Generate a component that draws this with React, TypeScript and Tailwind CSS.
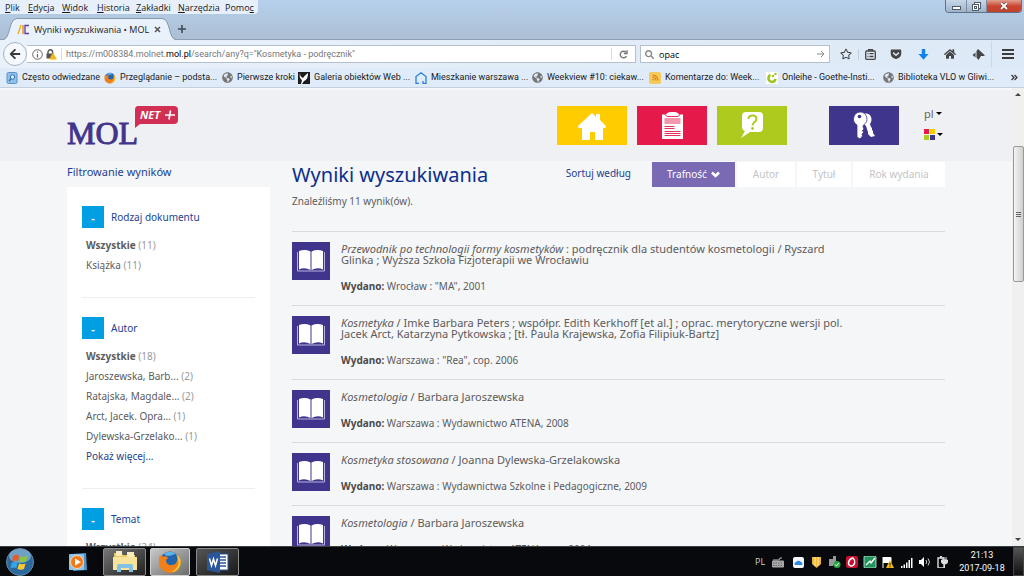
import React from "react";
import {
  FaArrowLeft,
  FaSearch,
  FaRegStar,
  FaGetPocket,
  FaHome,
  FaGlobeAmericas,
  FaRss,
} from "react-icons/fa";

const menus = [
  { before: "", key: "P", after: "lik", width: "w-[23px]" },
  { before: "", key: "E", after: "dycja", width: "w-[34px]" },
  { before: "", key: "W", after: "idok", width: "w-[35px]" },
  { before: "", key: "H", after: "istoria", width: "w-[39px]" },
  { before: "", key: "Z", after: "akładki", width: "w-[42px]" },
  { before: "", key: "N", after: "arzędzia", width: "w-[47px]" },
  { before: "Pomo", key: "c", after: "", width: "w-[33px]" },
];

const bookmarks = [
  { icon: "often", label: "Często odwiedzane", width: "w-[98px]" },
  { icon: "firefox", label: "Przeglądanie – podsta...", width: "w-[118px]" },
  { icon: "globe", label: "Pierwsze kroki", width: "w-[76px]" },
  { icon: "bird", label: "Galeria obiektów Web ...", width: "w-[117px]" },
  { icon: "house", label: "Mieszkanie warszawa ...", width: "w-[117px]" },
  { icon: "globe", label: "Weekview #10: ciekaw...", width: "w-[117px]" },
  { icon: "rss", label: "Komentarze do: Week...", width: "w-[117px]" },
  { icon: "onleihe", label: "Onleihe - Goethe-Insti...", width: "w-[117px]" },
  { icon: "globe", label: "Biblioteka VLO w Gliwi...", width: "w-[120px]" },
];

const filters = [
  {
    title: "Rodzaj dokumentu",
    items: [
      { label: "Wszystkie", count: 11 },
      { label: "Książka", count: 11 },
    ],
    more: false,
  },
  {
    title: "Autor",
    items: [
      { label: "Wszystkie", count: 18 },
      { label: "Jaroszewska, Barb...", count: 2 },
      { label: "Ratajska, Magdale...", count: 2 },
      { label: "Arct, Jacek. Opra...", count: 1 },
      { label: "Dylewska-Grzelako...", count: 1 },
    ],
    more: true,
  },
  {
    title: "Temat",
    items: [{ label: "Wszystkie", count: 24 }],
    more: true,
  },
];

const results = [
  {
    title: "Przewodnik po technologii formy kosmetyków",
    lines: [" : podręcznik dla studentów kosmetologii / Ryszard", "Glinka ; Wyższa Szkoła Fizjoterapii we Wrocławiu"],
    published: 'Wrocław : "MA", 2001',
  },
  {
    title: "Kosmetyka",
    lines: [
      " / Imke Barbara Peters ; współpr. Edith Kerkhoff [et al.] ; oprac. merytoryczne wersji pol.",
      "Jacek Arct, Katarzyna Pytkowska ; [tł. Paula Krajewska, Zofia Filipiuk-Bartz]",
    ],
    published: 'Warszawa : "Rea", cop. 2006',
  },
  {
    title: "Kosmetologia",
    lines: [" / Barbara Jaroszewska"],
    published: "Warszawa : Wydawnictwo ATENA, 2008",
  },
  {
    title: "Kosmetyka stosowana",
    lines: [" / Joanna Dylewska-Grzelakowska"],
    published: "Warszawa : Wydawnictwa Szkolne i Pedagogiczne, 2009",
  },
  {
    title: "Kosmetologia",
    lines: [" / Barbara Jaroszewska"],
    published: "Warszawa : Wydawnictwo ATENA, cop. 2004",
  },
];

const FirefoxLogo = ({ className }: { className: string }) => (
  <svg className={className} viewBox="0 0 24 24">
    <circle cx="12" cy="11.5" r="10" fill="#2463ae" />
    <path d="M6 4c3-3 9-3 12 0-2 0-3 1-5 1.500C10 6 8 6 6 4Z" fill="#5fb4ea" />
    <path d="M2 5c1 1 2 1.500 4 1.500 2-.5 3 0 4 1.500l-2 2c0 3 2 5 5 5 3 0 5-1 6-4 1-3 0-5-1-7 4 3 5 6 4.500 10-1 5-5 9-10.500 9S1 18.500 1 13c0-3 0-5 1-8Z" fill="#f08019" />
    <path d="M18 4c4 3 5 6 4.500 10-1 5-5 8-9 8 5-3 7-6 7-10 0-3-1-5-2.500-8Z" fill="#fbc92f" />
  </svg>
);

const BookmarkIcon = ({ icon }: { icon: string }) => {
  switch (icon) {
    case "often":
      return (
        <svg className="size-3 shrink-0" viewBox="0 0 12 12">
          <rect x="1" y="0.5" width="10" height="11" rx="1.5" fill="#8fc0ea" stroke="#5b93c9" />
          <circle cx="6.5" cy="5" r="2.2" fill="#e4f2fd" stroke="#2f6fae" />
          <path d="M5 6.8 3 9" stroke="#2f6fae" strokeWidth="1.3" />
        </svg>
      );
    case "firefox":
      return <FirefoxLogo className="size-3 shrink-0" />;
    case "bird":
      return (
        <svg className="size-3 shrink-0" viewBox="0 0 12 12">
          <rect width="12" height="12" fill="#1d1d1d" />
          <path d="M2 1c0 3 1 4 3 5C6 4 8 3 10 1c0 4-1 7-4 8l-2 3H3l1-4C2 7 1 4 2 1Z" fill="#fff" />
        </svg>
      );
    case "house":
      return (
        <svg className="size-3 shrink-0" viewBox="0 0 12 12" fill="none" stroke="#2a7fe0" strokeWidth="1.3">
          <path d="M4 11.300H1V4.500L6 .8l5 3.700v6.800H8V9" />
        </svg>
      );
    case "rss":
      return (
        <span className="flex size-3 shrink-0 items-center justify-center rounded-xs bg-[#f5c95c]">
          <FaRss size={7} className="text-[#e07b12]" />
        </span>
      );
    case "onleihe":
      return (
        <svg className="size-3 shrink-0" viewBox="0 0 12 12">
          <rect width="12" height="12" fill="#fff" />
          <path d="M4.500 3A3.600 3.600 0 1 0 9.500 7" fill="none" stroke="#9fc41c" strokeWidth="2.6" />
          <circle cx="7" cy="4" r="1.2" fill="#9fc41c" />
          <circle cx="9.500" cy="2" r="1.2" fill="#9fc41c" />
        </svg>
      );
    default:
      return <FaGlobeAmericas size={11} className="shrink-0 text-[#777]" />;
  }
};

const TitleBar = () => (
  <header className="flex h-10 flex-col bg-gradient-to-b from-[#b6d0ec] to-[#acbfd3]">
    <div className="flex h-[14px] items-start justify-between">
      <nav className="flex h-[14px] items-center rounded-br-sm bg-[#e6effa] pl-[5px]">
        {menus.map((menu) => (
          <button key={menu.key} className={`${menu.width} text-left whitespace-nowrap`}>
            {menu.before}
            <u>{menu.key}</u>
            {menu.after}
          </button>
        ))}
      </nav>
      <div className="mr-[2px] flex h-[13px] overflow-hidden rounded-b border border-t-0 border-[#5f7185]">
        <button aria-label="Minimalizuj" className="flex w-[21px] items-center justify-center border-r border-[#7b8c9f] bg-gradient-to-b from-[#c9d8e8] to-[#9db2c9]">
          <span className="mt-1 h-1 w-[9px] border border-[#4f5b69] bg-white" />
        </button>
        <button aria-label="Przywróć" className="flex w-5 items-center justify-center border-r border-[#7b8c9f] bg-gradient-to-b from-[#c9d8e8] to-[#9db2c9]">
          <svg className="size-[9px]" viewBox="0 0 9 9" fill="#fff" stroke="#4f5b69">
            <rect x="2.5" y="0.5" width="6" height="6" />
            <rect x="0.5" y="2.5" width="6" height="6" />
            <rect x="2.5" y="4.5" width="2" height="2" />
          </svg>
        </button>
        <button aria-label="Zamknij" className="flex w-[34px] items-center justify-center bg-gradient-to-b from-[#e0a093] via-[#c9452f] to-[#c2412c]">
          <svg className="size-2" viewBox="0 0 8 8">
            <path d="m1 1 6 6M7 1 1 7" stroke="#5b3a3a" strokeWidth="3" />
            <path d="m1 1 6 6M7 1 1 7" stroke="#fff" strokeWidth="1.8" />
          </svg>
        </button>
      </div>
    </div>
    <div className="flex flex-1 items-end border-b border-[#8ca0b5]">
      <div className="-mb-px ml-[3px] flex h-[22px]">
        <svg className="h-[22px] w-[14px]" viewBox="0 0 14 22">
          <path d="M0 22C8 21 5 1 14 .5V22Z" fill="#e9f1fb" />
          <path d="M0 21.500C8 21 5 1 14 .5" fill="none" stroke="#8798ab" />
        </svg>
        <div className="flex items-center border-t border-[#8798ab] bg-[#e9f1fb]">
          <svg className="size-[13px]" viewBox="0 0 13 13" fill="none">
            <path d="M4 2 1 11" stroke="#f3b21c" strokeWidth="1.5" />
            <path d="M6 2v9" stroke="#e98a2a" strokeWidth="1.5" />
            <path d="M12 2.500H8v8h4" stroke="#5b3fa0" strokeWidth="1.3" />
          </svg>
          <span className="ml-1 w-[118px] whitespace-nowrap text-[#222]">Wyniki wyszukiwania • MOL</span>
          <button aria-label="Zamknij kartę" className="mr-px ml-[2px] flex size-[7px] items-center">
            <svg className="size-[7px]" viewBox="0 0 7 7">
              <path d="m1 1 5 5M6 1 1 6" stroke="#555" strokeWidth="1.5" />
            </svg>
          </button>
        </div>
        <svg className="h-[22px] w-[14px]" viewBox="0 0 14 22">
          <path d="M14 22C6 21 9 1 0 .5V22Z" fill="#e9f1fb" />
          <path d="M14 21.500C6 21 9 1 0 .5" fill="none" stroke="#8798ab" />
        </svg>
      </div>
      <button aria-label="Nowa karta" className="mb-[6px] ml-[2px]">
        <svg className="size-2" viewBox="0 0 8 8">
          <path d="M4 0v8M0 4h8" stroke="#3d4a58" strokeWidth="1.6" />
        </svg>
      </button>
    </div>
  </header>
);

const Toolbar = () => (
  <div className="flex h-7 items-center bg-gradient-to-r from-[#e9f1fb] to-[#dde9f6] pl-[3px]">
    <button aria-label="Wstecz" className="flex size-6 shrink-0 items-center justify-center rounded-full border border-[#a3b2c3] bg-[#f5f9fd]">
      <FaArrowLeft size={12} className="text-[#3a3a3a]" />
    </button>
    <div className="flex h-[18px] flex-1 items-center border border-l-0 border-[#b4c0ce] bg-white pl-[5px]">
      <svg className="size-[11px]" viewBox="0 0 11 11">
        <circle cx="5.5" cy="5.5" r="4.8" fill="none" stroke="#666" />
        <path d="M5.500 5v3.500M5.500 2.500v1.300" stroke="#666" strokeWidth="1.2" />
      </svg>
      <svg className="ml-[3px] size-[11px]" viewBox="0 0 11 11">
        <path d="M2 5V3a2.300 2.300 0 0 1 4.600 0v2" fill="none" stroke="#555" strokeWidth="1.4" />
        <rect x="0.5" y="4.5" width="7" height="5" fill="#555" />
        <path d="m7 3.500 4 7H3Z" fill="#f5b51c" />
      </svg>
      <div className="ml-1 h-3 border-l border-[#ddd]" />
      <div className="ml-1 flex-1 font-['Roboto','Open_Sans',sans-serif] text-[9px] whitespace-nowrap text-[#777]">
        https://m008384.molnet.<span className="text-black">mol.pl</span>/search/any?q="Kosmetyka - podręcznik"
      </div>
      <button aria-label="Odśwież" className="flex h-3 w-6 items-center justify-center border-l border-[#ddd]">
        <svg className="size-[9px]" viewBox="0 0 9 9" fill="none" stroke="#777" strokeWidth="1.4">
          <path d="M7.500 6A3.300 3.300 0 1 1 7 2.300" />
          <path d="M8 .3v3.200H4.800" />
        </svg>
      </button>
    </div>
    <label className="ml-1 flex h-[18px] w-[190px] shrink-0 items-center border border-[#b4c0ce] bg-white px-1">
      <FaSearch size={9} className="shrink-0 text-[#888]" />
      <input aria-label="Szukaj" defaultValue="opac" className="ml-[5px] min-w-0 flex-1 text-[9px] text-black outline-none" />
      <svg className="size-2" viewBox="0 0 8 8" fill="none" stroke="#888">
        <path d="M0 4h7M4 1l3 3-3 3" />
      </svg>
    </label>
    <div className="flex w-[194px] shrink-0 items-center text-[#454545]">
      <button aria-label="Dodaj zakładkę" className="flex w-7 justify-center pl-1"><FaRegStar size={12} /></button>
      <button aria-label="Biblioteka" className="flex w-[23px] justify-center border-l border-[#c3cedb]">
        <svg className="size-[11px]" viewBox="0 0 11 11" fill="none" stroke="#454545" strokeWidth="1.3">
          <rect x="0.7" y="2" width="9.6" height="8.3" rx="1" />
          <path d="M3.500 2V.7h4V2M2.500 4.700h1M4.500 4.700h4M2.500 7.500h1M4.500 7.500h4" />
        </svg>
      </button>
      <button aria-label="Pocket" className="flex w-[30px] justify-center"><FaGetPocket size={12} /></button>
      <button aria-label="Pobrane pliki" className="flex w-6 justify-center">
        <svg className="size-[11px]" viewBox="0 0 11 11" fill="#1082f0">
          <path d="M3.800 0h3.400v5H10.500l-5 5.800L.5 5h3.300Z" />
        </svg>
      </button>
      <button aria-label="Strona startowa" className="flex w-[30px] justify-center"><FaHome size={12} /></button>
      <button aria-label="Dodatek" className="flex w-[26px] justify-center">
        <svg className="h-[11px] w-[13px]" viewBox="0 0 13 11" fill="#454545">
          <path d="M6 0 12.500 6v1H9L6.500 11 4.500 8.500V2Z" />
          <path d="M3.500 3.500v5L.5 6Z" />
        </svg>
      </button>
      <button aria-label="Menu" className="flex w-[33px] justify-center border-l border-[#ccd8e5] py-2">
        <svg className="h-[10px] w-3" viewBox="0 0 12 10" stroke="#3c3c3c" strokeWidth="2">
          <path d="M0 1h12M0 5h12M0 9h12" />
        </svg>
      </button>
    </div>
  </div>
);

const Bookmarks = () => (
  <nav className="flex h-5 items-center border-b border-[#c4d0de] bg-[#dfebf8] pl-[6px] font-['Roboto','Open_Sans',sans-serif]">
    {bookmarks.map(({ icon, label, width }) => (
      <a key={label} href="#" className={`flex shrink-0 items-center gap-1 whitespace-nowrap ${width}`}>
        <BookmarkIcon icon={icon} />
        {label}
      </a>
    ))}
    <button aria-label="Więcej zakładek" className="ml-auto pr-[6px]">
      <svg className="size-[7px]" viewBox="0 0 7 7" fill="none" stroke="#333" strokeWidth="1.2">
        <path d="m.5 1 2.500 2.500L.5 6M3.500 1 6 3.500 3.500 6" />
      </svg>
    </button>
  </nav>
);

const Logo = () => (
  <a href="#" aria-label="MOL NET+">
    <svg className="h-[46px] w-[118px]" viewBox="0 0 118 46">
      <text x="0" y="38" fontFamily="Liberation Serif, serif" fontSize="32" fill="#41348b" stroke="#41348b" strokeWidth="0.9">
        MOL
      </text>
      <path d="M71 0h36q4 0 4 4v10q0 4-4 4H73l-5 4V4q0-4 3-4Z" fill="#d12f54" />
      <text x="73" y="13" fontFamily="Open Sans, sans-serif" fontSize="11" fontWeight="700" fontStyle="italic" fill="#fff">
        NET
      </text>
      <path d="M103.500 4.500 102 13.500M98 9h10" stroke="#fff" strokeWidth="1.6" />
    </svg>
  </a>
);

const SiteHeader = () => (
  <header className="border-t-2 border-[#f6f7f9] bg-[#eef0f3]">
    <div className="mx-auto flex h-[71px] max-w-[878px] items-start pt-[16px]">
      <Logo />
      <nav className="ml-auto flex gap-[10px]">
        <a href="#" aria-label="Strona główna" className="flex h-[39px] w-[70px] items-center justify-center bg-[#ffcc00]">
          <svg className="size-7" viewBox="0 0 28 28" fill="#fff">
            <path d="M14 1 18 5V2h4v6l6 6v1l-1 1h-2v12h-8v-8h-5v8H4V16H1l-1-1v-1Z" />
          </svg>
        </a>
        <a href="#" aria-label="Schowek" className="flex h-[39px] w-[70px] items-center justify-center bg-[#e6194b]">
          <svg className="h-[27px] w-[21px]" viewBox="0 0 21 27">
            <path d="M0 2.500h4q1-2.500 4-2.500h5q3 0 4 2.500h4V27H0Z" fill="#fff" />
            <path d="M3 2.500q1 2 3 2h9q2 0 3-2M2.500 7h16M2.500 9h16M2.500 11h16M2.500 14.500h10M2.500 16.500h10M2.500 19.500h16M2.500 21.500h16M2.500 23.500h16" fill="none" stroke="#e6194b" strokeWidth="0.9" />
          </svg>
        </a>
        <a href="#" aria-label="Pomoc" className="flex h-[39px] w-[70px] items-center justify-center bg-[#afca1f]">
          <svg className="h-[27px] w-[22px]" viewBox="0 0 22 27">
            <path d="M5 0h13q4 0 4 4v12q0 4-4 4H9l-9 6 4-7q-3-1-3-4V4q0-4 4-4Z" fill="#fff" />
            <path d="M7.500 7q0-3.500 4-3.500t4 3.500c0 3-4 3-4 6.500" fill="none" stroke="#afca1f" strokeWidth="2" />
            <circle cx="11.5" cy="16.5" r="1.4" fill="#afca1f" />
          </svg>
        </a>
        <a href="#" aria-label="Zaloguj" className="ml-8 flex h-[39px] w-[70px] items-center justify-center bg-[#40358c]">
          <svg className="h-[27px] w-[22px]" viewBox="0 0 22 27">
            <path d="M11 2c5-2 9 3 7 8l-1 2 1 3 1 1v2l1 1v2l2 3-4 1-3-3v-2l-2-6-3-3Z" fill="#fff" />
            <path d="M7 0a7 7 0 0 1 3.500 13l-.5 2 1 2-1.500 1.500 1 2-1.500 1.500.5 2L7 27l-3-2V13A7 7 0 0 1 7 0Z" fill="#fff" stroke="#40358c" strokeWidth="0.8" />
            <circle cx="6.5" cy="4.5" r="1.8" fill="#40358c" />
          </svg>
        </a>
      </nav>
      <div className="ml-[25px] flex w-[21px] flex-col gap-[6px] text-[11px] leading-[15px] text-[#666]">
        <button className="flex items-center gap-[2px]">
          pl
          <span className="border-x-3 border-t-3 border-x-transparent border-t-black" />
        </button>
        <button aria-label="Kolory" className="flex h-[14px] items-center gap-[2px]">
          <span className="grid grid-cols-2 gap-px">
            <span className="size-[5px] bg-[#e6194b]" />
            <span className="size-[5px] bg-[#ffcc00]" />
            <span className="size-[5px] bg-[#afca1f]" />
            <span className="size-[5px] bg-[#40358c]" />
          </span>
          <span className="border-x-3 border-t-3 border-x-transparent border-t-black" />
        </button>
      </div>
    </div>
  </header>
);

const Sidebar = () => (
  <aside className="w-[203px] shrink-0">
    <h2 className="pt-[2px] text-[11px] leading-4 text-[#1c3f94]">Filtrowanie wyników</h2>
    <div className="mt-[7px] bg-white px-[15px]">
      {filters.map(({ title, items, more }) => (
        <section key={title} className="border-b border-[#eceef0] pt-[19px] pb-[22px]">
          <div className="flex items-center gap-[7px]">
            <button aria-label={`Zwiń ${title}`} className="h-[22px] w-[22px] bg-[#009fe3] text-[11px] font-bold text-white">
              -
            </button>
            <h3 className="text-[10px]  text-[#1c3f94]">{title}</h3>
          </div>
          <ul className="mt-[7px] pl-1 text-[10px] leading-5 text-[#5c5c5c]">
            {items.map(({ label, count }) => (
              <li key={label}>
                <a href="#" className={label === "Wszystkie" ? "font-bold" : ""}>{label}</a>{" "}
                <span className="text-[#999]">({count})</span>
              </li>
            ))}
            {more && (
              <li>
                <a href="#" className="text-[#1c3f94]">Pokaż więcej...</a>
              </li>
            )}
          </ul>
        </section>
      ))}
    </div>
  </aside>
);

const BookIcon = () => (
  <svg className="size-[38px] shrink-0" viewBox="0 0 38 38">
    <rect width="38" height="38" fill="#40358c" />
    <path d="M5.500 10v19h27V10" fill="none" stroke="#b9b4dc" />
    <path d="M7 9q6-2 11.500.5V28q-6-3-11.500-.5ZM31 9q-6-2-11.500.5V28q6-3 11.500-.5Z" fill="#fff" />
  </svg>
);

const Results = () => (
  <main className="min-w-0 flex-1">
    <div className="flex items-start">
      <h1 className="text-[20px] leading-[26px] whitespace-nowrap text-[#0c2f8c]">Wyniki wyszukiwania</h1>
      <span className="mr-[21px] ml-auto pt-[3px] text-[10px] leading-4 whitespace-nowrap text-[#1c3f94]">Sortuj według</span>
      <div className="flex h-[25px] gap-[2px] text-[10px] whitespace-nowrap text-[#c4c4c4]">
        <button className="flex w-[83px] items-center justify-center gap-1 bg-[#7a69b3] text-white">
          Trafność
          <svg className="h-[7px] w-[9px]" viewBox="0 0 9 7">
            <path d="m1 1.500 3.500 3.500L8 1.500" fill="none" stroke="#fff" strokeWidth="2.6" />
          </svg>
        </button>
        <button className="w-[58px] bg-white">Autor</button>
        <button className="w-[54px] bg-white">Tytuł</button>
        <button className="w-[92px] bg-white">Rok wydania</button>
      </div>
    </div>
    <p className="mt-[5px] text-[10px] leading-4 text-[#5c5c5c]">Znaleźliśmy 11 wynik(ów).</p>
    <ul className="mt-[22px]">
      {results.map(({ title, lines, published }, i) => (
        <li key={i} className="flex items-start gap-[11px] border-t border-[#d9dbde] pt-[10px] pb-[13px]">
          <BookIcon />
          <div className="pt-px text-[#5c5c5c]">
            <a href="#" className="block text-[11px] leading-[11px] whitespace-nowrap">
              <em>{title}</em>
              {lines.map((line) => (
                <React.Fragment key={line}>
                  {line !== lines[0] && <br />}
                  {line}
                </React.Fragment>
              ))}
            </a>
            <p className="mt-[15px] text-[10px] leading-3">
              <strong className="text-[#4a4a4a]">Wydano:</strong> {published}
            </p>
          </div>
        </li>
      ))}
    </ul>
  </main>
);

const Scrollbar = () => (
  <div aria-hidden="true" className="flex w-3 shrink-0 flex-col items-center bg-[#f0f0f0]">
    <span className="my-[5px] border-x-3 border-b-3 border-x-transparent border-b-[#444]" />
    <div className="mt-[45px] flex h-[136px] w-[11px] flex-col items-center justify-center gap-px rounded-xs border border-[#999] bg-gradient-to-r from-[#f4f4f4] to-[#cfcfcf]">
      <span className="h-px w-[5px] bg-[#666]" />
      <span className="h-px w-[5px] bg-[#666]" />
      <span className="h-px w-[5px] bg-[#666]" />
    </div>
    <span className="mt-auto mb-[5px] border-x-3 border-t-3 border-x-transparent border-t-[#444]" />
  </div>
);

const Tray = () => (
  <div className="ml-auto flex items-center text-white">
    <span className="w-[17px] text-[9px] text-[#ccc]">PL</span>
    <svg className="h-3 w-[182px]" viewBox="0 0 182 12">
      <path d="M1 4h5q2 0 2-2h2" fill="none" stroke="#bbb" />
      <rect y="4.500" width="12" height="7" rx="1" fill="#a9a9a9" />
      <path d="M1 7h10M1 9.500h10" stroke="#666" strokeDasharray="1.500 1" />
      <rect x="21" y="1" width="11" height="11" rx="2" fill="#f2f7fc" />
      <path d="M23 9a2 2 0 0 1 1-3 3 3 0 0 1 5 0 2 2 0 0 1 1 3Z" fill="#2e8be0" />
      <path d="M40 1h9v7l-4.500 4L40 8Z" fill="#f2b632" />
      <path d="M43 1v9M46 1v9" stroke="#fff0c0" />
      <path d="M57 3h4V0h3v5l-3 5h-4Z" fill="#999" />
      <circle cx="65" cy="8.500" r="3.500" fill="#2aa745" />
      <path d="m63 8.500 1.500 1.500 2.500-3" fill="none" stroke="#fff" />
      <rect x="74" y="0" width="12" height="12" rx="2" fill="#c8102e" />
      <path d="M81 2c-5 1-6 7-2 8 4 0 5-5 2-8Z" fill="none" stroke="#fff" strokeWidth="1.5" />
      <rect x="92" y="0" width="12" height="12" rx="1" fill="#20945a" stroke="#d5eee0" strokeWidth="0.8" />
      <path d="m94 9 4-4 1 2 4-5" fill="none" stroke="#fff" strokeWidth="1.3" />
      <path d="M111 1v11M111 1.500h8v5h-8" fill="#fff" stroke="#fff" />
      <path d="m118 4 4 8h-8Z" fill="#f5b91d" />
      <path d="M118 7v2.500M118 10.300v1" stroke="#222" />
      <path d="M129 12v-2h1.500v2M131.500 12V8.500h1.500V12M134 12V6.500h1.500V12M136.500 12V4h1.500v8M139 12V2h1.500v10" fill="#fff" />
      <path d="M147 4h2l3-3v10l-3-3h-2Z" fill="#fff" />
      <path d="M154 4q1.500 2 0 4M156 2.500q3 3.500 0 7" fill="none" stroke="#ccc" />
      <path d="M166 2h6v10h-6ZM168 .5h2" fill="none" stroke="#ddd" strokeWidth="1.4" />
      <path d="M171 4v-3M174 4v-3M169.500 4h6v2q0 2-3 2t-3-2ZM172.500 8v4" fill="#ddd" stroke="#ddd" />
    </svg>
    <time className="w-[56px] text-center font-['Roboto','Open_Sans',sans-serif] text-[9px] leading-[13px]">
      21:13
      <br />
      2017-09-18
    </time>
    <button aria-label="Pokaż pulpit" className="ml-[3px] h-[29px] w-[11px] border border-[#444] bg-gradient-to-b from-[#555] to-[#111]" />
  </div>
);

const Taskbar = () => (
  <footer className="flex h-[30px] shrink-0 items-center border-t border-[#3a3f46] bg-[#07090c]">
    <button aria-label="Start" className="ml-[6px]">
      <svg className="size-7" viewBox="0 0 28 28">
        <circle cx="14" cy="14" r="13.5" fill="#2b689c" stroke="#6b8ba8" />
        <ellipse cx="14" cy="8" rx="11" ry="7" fill="#8db8d8" opacity="0.7" />
        <path d="M7 8q3-2 6-.5L12 13q-3-1-6 .5Z" fill="#ea5a27" />
        <path d="M14.500 8q3 1.500 7 0L20 13.500q-3 1.500-6.500 0Z" fill="#8cc63e" />
        <path d="M5.500 15q3-1.500 6-.5L10.500 20q-3-1-6 .5Z" fill="#35a7e8" />
        <path d="M13 15.500q3 1.500 6.500 0L18 21q-3 1.500-6.500 0Z" fill="#fdc82f" />
      </svg>
    </button>
    <button aria-label="Odtwarzacz" className="ml-[34px]">
      <svg className="size-5" viewBox="0 0 20 20">
        <path d="M3 2 18 1l1 17-14 1Z" fill="#4e94c6" />
        <rect x="1" y="2" width="15" height="16" rx="1" fill="#8cc4e8" />
        <circle cx="9" cy="10" r="6.5" fill="#f07a1a" stroke="#fbd7b5" />
        <path d="m7 6.500 6 3.500-6 3.500Z" fill="#fff" />
      </svg>
    </button>
    <button aria-label="Eksplorator" className="ml-[15px] flex h-[28px] w-[43px] items-center justify-center rounded-xs border border-[#8d8d8d] bg-gradient-to-br from-[#777] to-[#222]">
      <svg className="h-6 w-[26px]" viewBox="0 0 26 24">
        <path d="M2 3h7l2 2h12v15H2Z" fill="#e8c765" />
        <path d="M4 1h6v5H4ZM15 2h7v5h-7Z" fill="#f6ecc0" />
        <path d="M1 7h24v13H1Z" fill="#f7e39a" />
        <path d="M5 22v-6q0-2 2-2h12q2 0 2 2v6h-4v-4H9v4Z" fill="#83c0e6" />
      </svg>
    </button>
    <button aria-label="Firefox" className="ml-1 flex h-[28px] w-[40px] items-center justify-center rounded-xs border border-[#d0d0d0] bg-gradient-to-br from-[#c9c9c9] to-[#6c6c6c]">
      <FirefoxLogo className="size-6" />
    </button>
    <button aria-label="Word" className="ml-[6px] flex h-[28px] w-[43px] items-center justify-center rounded-xs border border-[#8d8d8d] bg-gradient-to-br from-[#555] to-[#1a1a1a]">
      <svg className="h-[22px] w-[22px]" viewBox="0 0 22 22">
        <rect x="11" y="3" width="10" height="16" fill="#fff" stroke="#2b579a" />
        <path d="M13 6h6M13 9h6M13 12h6M13 15h6" stroke="#2b579a" strokeWidth="1.3" />
        <path d="m0 3 13-3v22L0 19Z" fill="#2b579a" />
        <path d="m2.500 7.500 2 7 2-6.500 2 6.500 2-7" fill="none" stroke="#fff" strokeWidth="1.5" />
      </svg>
    </button>
    <Tray />
  </footer>
);

const App: React.FC = () => {
  return (
    <div className="flex h-screen flex-col overflow-hidden font-['Open_Sans','Noto_Sans',sans-serif] text-[9px] leading-[13px] text-[#1a1a1a]">
      <TitleBar />
      <Toolbar />
      <Bookmarks />
      <div className="flex min-h-0 flex-1">
        <div className="min-w-0 flex-1 overflow-hidden bg-[#f5f6f8] font-['Noto_Sans','Open_Sans',sans-serif]">
          <SiteHeader />
          <div className="mx-auto flex max-w-[878px] gap-[22px] pt-px">
            <Sidebar />
            <Results />
          </div>
        </div>
        <Scrollbar />
      </div>
      <Taskbar />
    </div>
  );
};

export default App;
